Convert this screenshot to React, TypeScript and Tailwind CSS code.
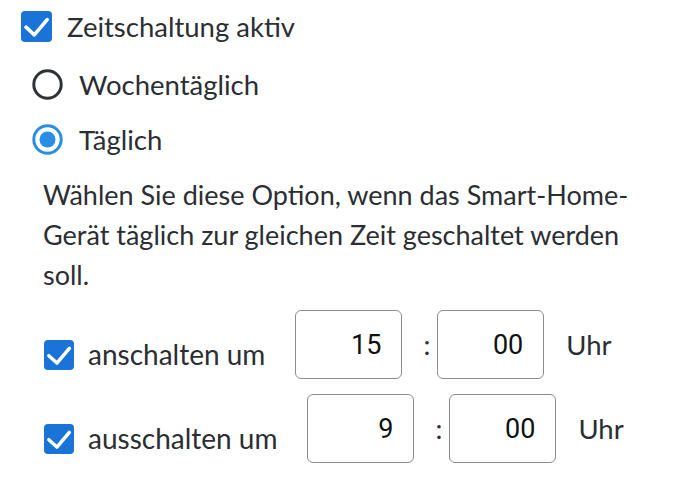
import { useState } from 'react'

function CheckBox({ size, checked }: { size: number; checked: boolean }) {
  return (
    <span
      className="flex shrink-0 items-center justify-center rounded-[4px] bg-[#1a73d6]"
      style={{ width: size, height: size }}
    >
      {checked && (
        <svg width={size} height={size} viewBox="0 0 31 31" fill="none">
          <path
            d="M5 16.2 L13.3 23.8 L26.2 8.6"
            stroke="white"
            strokeWidth="3.6"
            strokeLinecap="round"
            strokeLinejoin="round"
          />
        </svg>
      )}
    </span>
  )
}

function Radio({ checked }: { checked: boolean }) {
  return (
    <svg width="31" height="31" viewBox="0 0 31 31" className="shrink-0">
      <circle
        cx="15.5"
        cy="15.5"
        r="13.7"
        fill="none"
        stroke={checked ? '#2a8de6' : '#2f3337'}
        strokeWidth="3"
      />
      {checked && <circle cx="15.5" cy="15.5" r="8" fill="#2a8de6" />}
    </svg>
  )
}

function TimeRow({ label, hour, minute }: { label: string; hour: string; minute: string }) {
  return (
    <div className="flex h-[69px] items-center pl-[44px]">
      <label className="mt-[20px] flex items-center gap-[14px] text-[28px]">
        <CheckBox size={30} checked />
        <span className="leading-[1.2]">{label}</span>
      </label>
      <input
        readOnly
        value={hour}
        className="ml-[30px] h-[69px] w-[107px] rounded-[6px] border border-[#8c8c8c] bg-white pr-[20px] text-right font-['Roboto',sans-serif] text-[27px] text-[#111] outline-none"
      />
      <span className="ml-[21px] mr-[7px] leading-none">:</span>
      <input
        readOnly
        value={minute}
        className="h-[69px] w-[107px] rounded-[6px] border border-[#8c8c8c] bg-white pr-[20px] text-right font-['Roboto',sans-serif] text-[27px] text-[#111] outline-none"
      />
      <span className="ml-[22px] leading-[1.2]">Uhr</span>
    </div>
  )
}

export default function App() {
  const [mode] = useState<'weekly' | 'daily'>('daily')

  return (
    <div className="h-[477px] w-[690px] bg-white pt-[4px] font-['Lato',sans-serif] text-[27.5px] text-[#2b2e33]">
      <label className="flex h-[45px] items-center gap-[15px] pl-[21px]">
        <CheckBox size={31} checked />
        <span className="leading-[1.2]">Zeitschaltung aktiv</span>
      </label>

      <div className="mt-[8px] flex flex-col">
        <label className="flex h-[55px] items-center gap-[16px] pl-[32px]">
          <Radio checked={mode === 'weekly'} />
          <span className="leading-[1.2]">Wochentäglich</span>
        </label>
        <label className="flex h-[55px] items-center gap-[16px] pl-[32px]">
          <Radio checked={mode === 'daily'} />
          <span className="leading-[1.2]">Täglich</span>
        </label>
      </div>

      <p className="mt-[8px] w-[640px] pl-[43px] text-[27px] leading-[40px]">
        Wählen Sie diese Option, wenn das Smart-Home-Gerät täglich zur gleichen Zeit geschaltet
        werden soll.
      </p>

      <div className="mt-[15px] flex flex-col gap-[15px]">
        <TimeRow label="anschalten um" hour="15" minute="00" />
        <TimeRow label="ausschalten um" hour="9" minute="00" />
      </div>
    </div>
  )
}
